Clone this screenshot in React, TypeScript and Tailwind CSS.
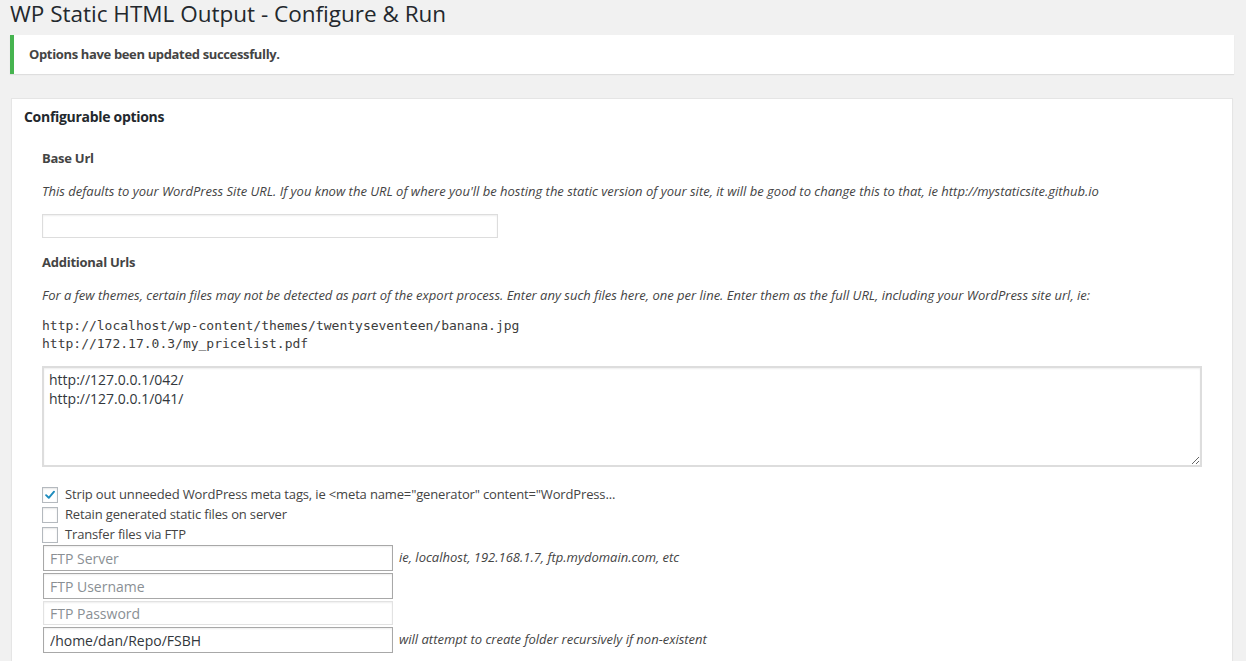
import React from 'react';

const sans = "font-['Open_Sans',_'Liberation_Sans',_sans-serif]";

function Check({ checked, label }: { checked?: boolean; label: string }) {
  return (
    <label className="flex items-center h-[16px] text-[13px] tracking-[-0.15px] text-[#444]">
      <span className="w-[16px] h-[16px] border border-[#b4b9be] bg-white shadow-[inset_0_1px_2px_rgba(0,0,0,0.1)] flex items-center justify-center shrink-0">
        {checked && (
          <svg viewBox="0 0 16 16" className="w-[16px] h-[16px]">
            <path d="M3.5 8.2 L6.6 11.2 L12.6 4.2" fill="none" stroke="#1e8cbe" strokeWidth="2.2" strokeLinecap="round" strokeLinejoin="round" />
          </svg>
        )}
      </span>
      <span className="ml-[7px] whitespace-nowrap">{label}</span>
    </label>
  );
}

function FtpInput({ placeholder, value, hint, light, h }: { placeholder: string; value?: string; hint?: string; light?: boolean; h: string }) {
  return (
    <div className="flex items-center ml-[1px]">
      <input
        readOnly
        placeholder={placeholder}
        defaultValue={value}
        className={`w-[350px] ${h} px-[6px] text-[14px] text-[#32373c] placeholder:text-[#8a8f94] bg-white outline-none border ${light ? 'border-[#e2e2e2]' : 'border-[#a8a8a8]'} shadow-[inset_0_1px_2px_rgba(0,0,0,0.07)]`}
      />
      {hint && <span className="ml-[6px] text-[13px] italic text-[#444] whitespace-nowrap">{hint}</span>}
    </div>
  );
}

export default function App() {
  return (
    <div className={`min-h-screen bg-[#f1f1f1] pl-[10px] pr-[12px] ${sans}`}>
      <h1 className="text-[22.5px] leading-[28px] text-[#23282d] font-normal">
        WP Static HTML Output - Configure &amp; Run
      </h1>

      <div className="mt-[7px] h-[39px] bg-white border-l-4 border-[#46b450] shadow-[0_1px_1px_rgba(0,0,0,0.08)] flex items-center pl-[15px]">
        <p className="text-[13px] tracking-[-0.35px] font-bold text-[#444]">Options have been updated successfully.</p>
      </div>

      <div className="mt-[24px] mx-[1px] bg-white border border-[#e5e5e5] shadow-[0_1px_1px_rgba(0,0,0,0.04)] pb-[40px]">
        <div className="h-[34px] flex items-center pl-[12px]">
          <h2 className="text-[14px] tracking-[-0.3px] font-bold text-[#23282d]">Configurable options</h2>
        </div>

        <div className="px-[30px]">
          <h3 className="mt-[15px] text-[13px] tracking-[-0.25px] leading-[20px] font-bold text-[#444]">Base Url</h3>
          <p className="mt-[13px] text-[13px] leading-[20px] italic text-[#444] whitespace-nowrap">
            This defaults to your WordPress Site URL. If you know the URL of where you'll be hosting the static version of your site, it will be good to change this to that, ie http://mystaticsite.github.io
          </p>
          <input
            readOnly
            className="mt-[13px] block w-[456px] h-[24px] border border-[#ddd] bg-white shadow-[inset_0_1px_2px_rgba(0,0,0,0.07)] outline-none"
          />

          <h3 className="mt-[14px] text-[13px] tracking-[-0.25px] leading-[20px] font-bold text-[#444]">Additional Urls</h3>
          <p className="mt-[13px] text-[13px] leading-[20px] italic text-[#444] whitespace-nowrap">
            For a few themes, certain files may not be detected as part of the export process. Enter any such files here, one per line. Enter them as the full URL, including your WordPress site url, ie:
          </p>
          <pre className="mt-[12px] text-[13px] leading-[18px] text-[#3c3c3c] font-['DejaVu_Sans_Mono',_monospace]">
{`http://localhost/wp-content/themes/twentyseventeen/banana.jpg
http://172.17.0.3/my_pricelist.pdf`}
          </pre>
          <textarea
            readOnly
            defaultValue={'http://127.0.0.1/042/\nhttp://127.0.0.1/041/'}
            className="mt-[13px] block w-full h-[101px] px-[5px] py-[2px] text-[14px] leading-[19px] text-[#32373c] border-2 border-[#ddd] bg-white shadow-[inset_0_1px_2px_rgba(0,0,0,0.07)] outline-none"
          />

          <div className="mt-[20px] flex flex-col gap-[4px]">
            <Check checked label={'Strip out unneeded WordPress meta tags, ie <meta name="generator" content="WordPress...'} />
            <Check label="Retain generated static files on server" />
            <Check label="Transfer files via FTP" />
          </div>

          <div className="mt-[2px] flex flex-col gap-[2px]">
            <FtpInput h="h-[26px]" placeholder="FTP Server" hint="ie, localhost, 192.168.1.7, ftp.mydomain.com, etc" />
            <FtpInput h="h-[26px]" placeholder="FTP Username" />
            <FtpInput h="h-[24px]" placeholder="FTP Password" light />
            <FtpInput h="h-[26px]" placeholder="FTP Remote Path" value="/home/dan/Repo/FSBH" hint="will attempt to create folder recursively if non-existent" />
          </div>
        </div>
      </div>
    </div>
  );
}
